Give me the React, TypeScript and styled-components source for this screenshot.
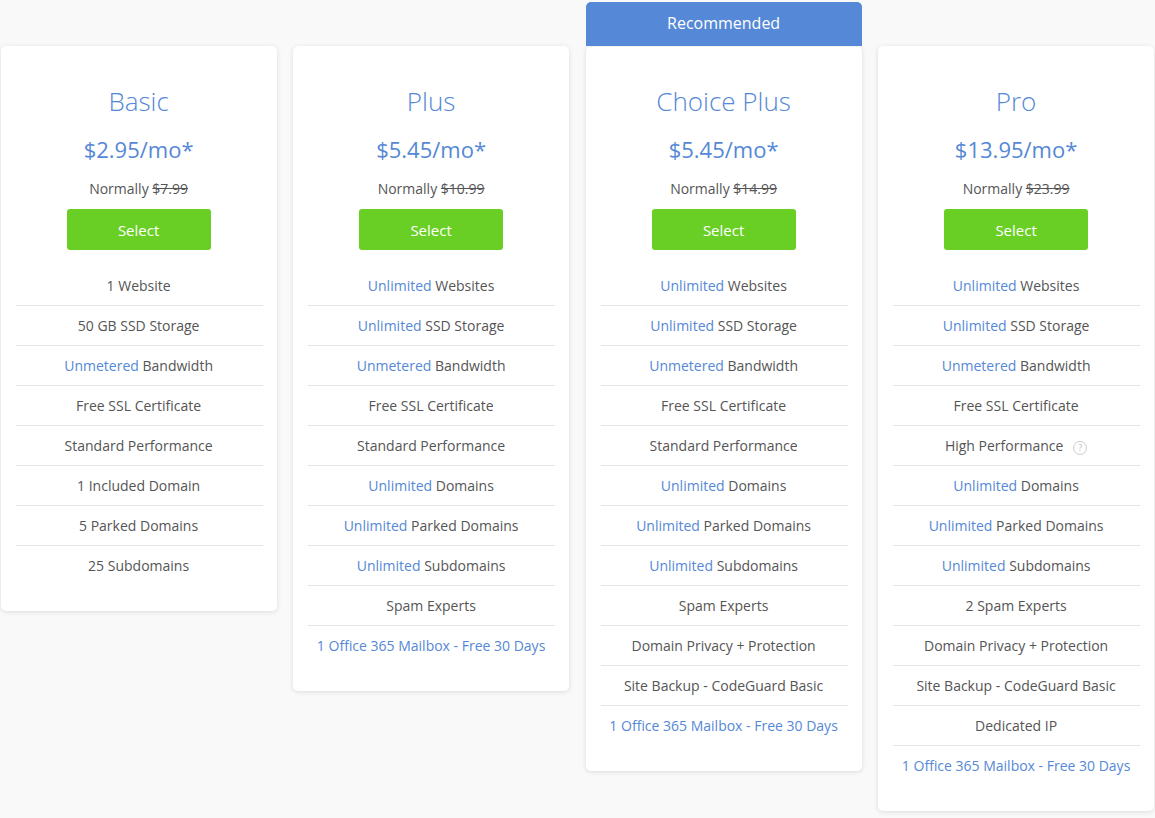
import styled, { createGlobalStyle } from "styled-components";

const GlobalStyle = createGlobalStyle`
  html, body {
    margin: 0;
    padding: 0;
    background: #f9f9f9;
  }
  body {
    font-family: "Open Sans", "Liberation Sans", sans-serif;
    font-size: 14px;
    color: #555;
  }
`;

type Feature = {
  hi?: string;
  text?: string;
  help?: boolean;
};

type Plan = {
  name: string;
  price: string;
  normal: string;
  recommended?: boolean;
  features: Feature[];
};

const unlimited = (text: string): Feature => ({ hi: "Unlimited", text });
const office: Feature = { hi: "1 Office 365 Mailbox - Free 30 Days" };

const plans: Plan[] = [
  {
    name: "Basic",
    price: "$2.95/mo*",
    normal: "$7.99",
    features: [
      { text: "1 Website" },
      { text: "50 GB SSD Storage" },
      { hi: "Unmetered", text: "Bandwidth" },
      { text: "Free SSL Certificate" },
      { text: "Standard Performance" },
      { text: "1 Included Domain" },
      { text: "5 Parked Domains" },
      { text: "25 Subdomains" },
    ],
  },
  {
    name: "Plus",
    price: "$5.45/mo*",
    normal: "$10.99",
    features: [
      unlimited("Websites"),
      unlimited("SSD Storage"),
      { hi: "Unmetered", text: "Bandwidth" },
      { text: "Free SSL Certificate" },
      { text: "Standard Performance" },
      unlimited("Domains"),
      unlimited("Parked Domains"),
      unlimited("Subdomains"),
      { text: "Spam Experts" },
      office,
    ],
  },
  {
    name: "Choice Plus",
    price: "$5.45/mo*",
    normal: "$14.99",
    recommended: true,
    features: [
      unlimited("Websites"),
      unlimited("SSD Storage"),
      { hi: "Unmetered", text: "Bandwidth" },
      { text: "Free SSL Certificate" },
      { text: "Standard Performance" },
      unlimited("Domains"),
      unlimited("Parked Domains"),
      unlimited("Subdomains"),
      { text: "Spam Experts" },
      { text: "Domain Privacy + Protection" },
      { text: "Site Backup - CodeGuard Basic" },
      office,
    ],
  },
  {
    name: "Pro",
    price: "$13.95/mo*",
    normal: "$23.99",
    features: [
      unlimited("Websites"),
      unlimited("SSD Storage"),
      { hi: "Unmetered", text: "Bandwidth" },
      { text: "Free SSL Certificate" },
      { text: "High Performance", help: true },
      unlimited("Domains"),
      unlimited("Parked Domains"),
      unlimited("Subdomains"),
      { text: "2 Spam Experts" },
      { text: "Domain Privacy + Protection" },
      { text: "Site Backup - CodeGuard Basic" },
      { text: "Dedicated IP" },
      office,
    ],
  },
];

export default function App() {
  return (
    <>
      <GlobalStyle />
      <Page>
        {plans.map((plan) => (
          <Card key={plan.name}>
            {plan.recommended && <Ribbon>Recommended</Ribbon>}
            <Name>{plan.name}</Name>
            <Price>{plan.price}</Price>
            <Normally>
              Normally <s>{plan.normal}</s>
            </Normally>
            <SelectButton>Select</SelectButton>
            <Features>
              {plan.features.map((f, i) => (
                <FeatureRow key={i}>
                  {f.hi && <Highlight>{f.hi}</Highlight>}
                  {f.hi && f.text ? " " : ""}
                  {f.text}
                  {f.help && <HelpIcon>?</HelpIcon>}
                </FeatureRow>
              ))}
            </Features>
          </Card>
        ))}
      </Page>
    </>
  );
}

const Page = styled.div`
  width: 1155px;
  height: 818px;
  box-sizing: border-box;
  padding: 46px 0 0 0.6px;
  display: grid;
  grid-template-columns: repeat(4, 276px);
  column-gap: 16.5px;
  align-items: start;
  overflow: hidden;
`;

const Card = styled.div`
  position: relative;
  background: #fff;
  border-radius: 5px;
  box-shadow: 0 1px 5px rgba(0, 0, 0, 0.12);
  padding: 35px 15px 25px;
  text-align: center;
`;

const Ribbon = styled.div`
  position: absolute;
  left: 0;
  right: 0;
  top: -44px;
  height: 44px;
  line-height: 42px;
  background: #5588d6;
  color: #fff;
  font-size: 16px;
  border-radius: 5px 5px 0 0;
  border-bottom: 1px solid #f1f1f1;
`;

const Name = styled.div`
  font-size: 26px;
  font-weight: 300;
  line-height: 40px;
  color: #5588d6;
`;

const Price = styled.div`
  margin-top: 8px;
  font-size: 22px;
  line-height: 40px;
  color: #5588d6;
`;

const Normally = styled.div`
  margin-top: 10px;
  line-height: 20px;
  color: #555;
`;

const SelectButton = styled.button`
  display: block;
  width: 144px;
  height: 41px;
  margin: 10px auto 0;
  padding: 0;
  border: 0;
  border-radius: 3px;
  background: #6acf25;
  color: #fff;
  font-family: inherit;
  font-size: 15px;
`;

const Features = styled.div`
  margin: 16px -1px 0 0;
`;

const FeatureRow = styled.div`
  height: 40px;
  box-sizing: border-box;
  padding-right: 1px;
  line-height: 39px;
  border-bottom: 1px solid #e5e5e5;
  color: #555;

  &:last-child {
    border-bottom: 0;
  }
`;

const Highlight = styled.span`
  color: #5588d6;
`;

const HelpIcon = styled.span`
  display: inline-block;
  width: 12px;
  height: 12px;
  margin-left: 10px;
  border: 1px solid #ccc;
  border-radius: 50%;
  color: #bbb;
  font-size: 9px;
  line-height: 12px;
  vertical-align: 0;
`;
